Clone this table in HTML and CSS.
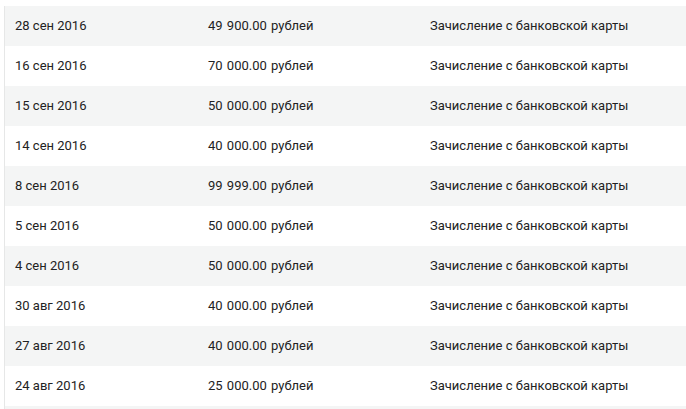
FILE: index.html
```html
<!DOCTYPE html>
<html lang="ru">
<head>
<meta charset="utf-8">
<link rel="stylesheet" href="styles.css">
</head>
<body>
<div class="list">
  <div class="row"><span>28 сен 2016</span><span class="sum">49 900.00 рублей</span><span>Зачисление с банковской карты</span></div>
  <div class="row"><span>16 сен 2016</span><span class="sum">70 000.00 рублей</span><span>Зачисление с банковской карты</span></div>
  <div class="row"><span>15 сен 2016</span><span class="sum">50 000.00 рублей</span><span>Зачисление с банковской карты</span></div>
  <div class="row"><span>14 сен 2016</span><span class="sum">40 000.00 рублей</span><span>Зачисление с банковской карты</span></div>
  <div class="row"><span>8 сен 2016</span><span class="sum">99 999.00 рублей</span><span>Зачисление с банковской карты</span></div>
  <div class="row"><span>5 сен 2016</span><span class="sum">50 000.00 рублей</span><span>Зачисление с банковской карты</span></div>
  <div class="row"><span>4 сен 2016</span><span class="sum">50 000.00 рублей</span><span>Зачисление с банковской карты</span></div>
  <div class="row"><span>30 авг 2016</span><span class="sum">40 000.00 рублей</span><span>Зачисление с банковской карты</span></div>
  <div class="row"><span>27 авг 2016</span><span class="sum">40 000.00 рублей</span><span>Зачисление с банковской карты</span></div>
  <div class="row"><span>24 авг 2016</span><span class="sum">25 000.00 рублей</span><span>Зачисление с банковской карты</span></div>
  <div class="row row-empty"></div>
</div>
</body>
</html>
```

FILE: styles.css
```css
html, body {
  margin: 0;
  padding: 0;
  background: #ffffff;
}
body {
  font-family: Roboto, "Liberation Sans", sans-serif;
  font-size: 13px;
  color: #222222;
  padding-top: 6px;
  overflow: hidden;
}
.list {
  margin-left: 4px;
  border-left: 1px solid #e6e7e7;
}
.row {
  display: grid;
  grid-template-columns: 193px 222px 1fr;
  align-items: center;
  height: 40px;
  padding-left: 10px;
  padding-bottom: 1px;
  box-sizing: border-box;
}
.row:nth-child(odd) {
  background: #f4f5f5;
}
.sum {
  word-spacing: 1px;
}
```
